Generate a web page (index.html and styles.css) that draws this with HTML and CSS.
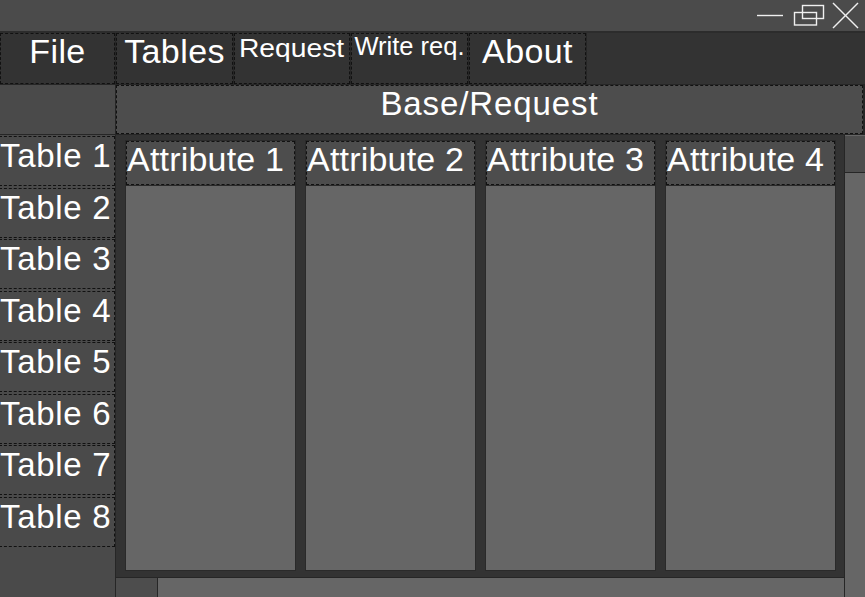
FILE: index.html
```html
<!DOCTYPE html>
<html>
<head>
<meta charset="utf-8">
<link rel="stylesheet" href="styles.css">
</head>
<body>
<div class="window">
  <div class="titlebar">
    <svg class="controls" width="110" height="31" viewBox="0 0 110 31">
      <line x1="2" y1="15.5" x2="28" y2="15.5" stroke="#f0f0f0" stroke-width="1.4"/>
      <rect x="47.5" y="5.5" width="21" height="13" fill="none" stroke="#f0f0f0" stroke-width="1.4"/>
      <rect x="39.5" y="12.5" width="22" height="12.5" fill="none" stroke="#f0f0f0" stroke-width="1.4"/>
      <line x1="78" y1="3" x2="103" y2="28" stroke="#f0f0f0" stroke-width="1.5"/>
      <line x1="103" y1="3" x2="78" y2="28" stroke="#f0f0f0" stroke-width="1.5"/>
    </svg>
  </div>
  <div class="menubar">
    <div class="menu-item big w115">File</div>
    <div class="menu-item big w117">Tables</div>
    <div class="menu-item small w116"><span class="stretch">Request</span></div>
    <div class="menu-item small w117 tight">Write req.</div>
    <div class="menu-item big w117">About</div>
    <div class="menu-fill"></div>
  </div>
  <div class="pathrow">
    <div class="path-spacer"></div>
    <div class="path">Base/Request</div>
  </div>
  <div class="main">
    <div class="tables">
      <div class="table-item">Table 1</div>
      <div class="table-item">Table 2</div>
      <div class="table-item">Table 3</div>
      <div class="table-item">Table 4</div>
      <div class="table-item">Table 5</div>
      <div class="table-item">Table 6</div>
      <div class="table-item">Table 7</div>
      <div class="table-item">Table 8</div>
    </div>
    <div class="center">
      <div class="columns">
        <div class="column"><div class="col-head">Attribute 1</div><div class="col-body"></div></div>
        <div class="column"><div class="col-head">Attribute 2</div><div class="col-body"></div></div>
        <div class="column"><div class="col-head">Attribute 3</div><div class="col-body"></div></div>
        <div class="column"><div class="col-head">Attribute 4</div><div class="col-body"></div></div>
      </div>
    </div>
    <div class="vscroll"><div class="vscroll-top"></div></div>
    <div class="hscroll"><div class="hscroll-left"></div></div>
  </div>
</div>
</body>
</html>
```

FILE: styles.css
```css
* { box-sizing: border-box; }

body {
  margin: 0;
  background: #333333;
  font-family: "Liberation Sans", Arial, sans-serif;
  color: #ffffff;
  width: 865px;
  height: 597px;
  overflow: hidden;
}

.window {
  width: 865px;
  height: 597px;
  display: flex;
  flex-direction: column;
}

.titlebar {
  height: 33px;
  background: #4b4b4b;
  border-bottom: 2px solid #2c2c2c;
  display: flex;
  justify-content: flex-end;
}

.controls { display: block; }

.menubar {
  height: 51px;
  display: flex;
  gap: 1px;
  background: #262626;
}

.menu-item {
  height: 51px;
  background: #333333;
  border: 1px dashed #111111;
  text-align: center;
  white-space: nowrap;
  overflow: hidden;
}

.w115 { width: 115px; }
.w116 { width: 116px; }
.w117 { width: 117px; }

.menu-item.big {
  font-size: 34px;
  letter-spacing: 0.4px;
  line-height: 35px;
}

.menu-item.small {
  font-size: 25px;
  line-height: 25px;
  padding-top: 2px;
}

.menu-item.tight {
  padding-top: 0;
  font-size: 25.5px;
}

.stretch {
  display: inline-block;
  transform: scaleX(1.13);
}

.menu-fill {
  flex: 1;
  background: #333333;
}

.pathrow {
  height: 51px;
  display: flex;
  gap: 1px;
  background: #262626;
  padding: 1px 2px 1px 0;
}

.path-spacer {
  width: 115px;
  background: #4a4a4a;
}

.path {
  flex: 1;
  background: #4d4d4d;
  border: 1px dashed #111111;
  font-size: 33px;
  letter-spacing: 0.9px;
  line-height: 36px;
  text-align: center;
}

.main {
  flex: 1;
  display: grid;
  grid-template-columns: 116px 728px 21px;
  grid-template-rows: 442px 20px;
}

.tables {
  grid-row: 1 / 3;
  grid-column: 1;
  background: #4a4a4a;
  border-right: 1px solid #262626;
  padding-top: 1px;
  display: flex;
  flex-direction: column;
  gap: 1.5px;
  overflow: hidden;
}

.table-item {
  height: 50px;
  flex: none;
  width: 116px;
  margin-left: -1px;
  border: 1px dashed #111111;
  font-size: 33px;
  letter-spacing: 0.7px;
  line-height: 37px;
  white-space: nowrap;
}

.center {
  grid-row: 1;
  grid-column: 2;
  background: #333333;
  padding: 5px 7px 6px 9px;
}

.columns {
  height: 100%;
  display: grid;
  grid-template-columns: repeat(4, 171px);
  gap: 9px;
}

.column {
  display: flex;
  flex-direction: column;
  gap: 1px;
  background: #2a2a2a;
  padding: 1px;
}

.col-head {
  height: 44px;
  background: #4d4d4d;
  border: 1px dashed #111111;
  font-size: 34px;
  letter-spacing: 0.2px;
  line-height: 34px;
  white-space: nowrap;
  overflow: hidden;
}

.col-body {
  flex: 1;
  background: #666666;
}

.vscroll {
  grid-row: 1 / 3;
  grid-column: 3;
  background: #666666;
  border-left: 1px solid #262626;
  padding-top: 1px;
}

.vscroll-top {
  height: 37px;
  background: #4d4d4d;
  border-bottom: 1px solid #262626;
}

.hscroll {
  grid-row: 2;
  grid-column: 2;
  background: #666666;
  border-top: 1px solid #262626;
  display: flex;
}

.hscroll-left {
  width: 42px;
  background: #4d4d4d;
  border-right: 1px solid #262626;
}
```
